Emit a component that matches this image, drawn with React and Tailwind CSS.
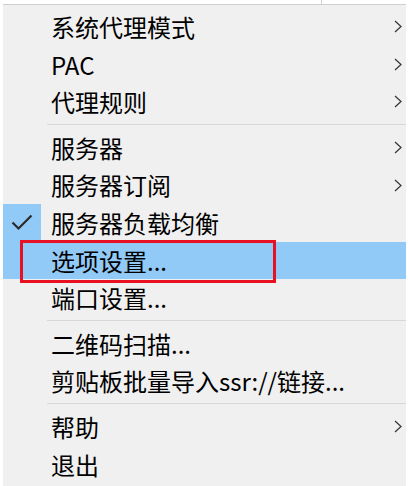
const menu = [
  { label: "系统代理模式", sub: true },
  { label: "PAC", sub: true },
  { label: "代理规则", sub: true },
  "sep",
  { label: "服务器", sub: true },
  { label: "服务器订阅", sub: true },
  { label: "服务器负载均衡", checked: true },
  { label: "选项设置...", active: true },
  { label: "端口设置..." },
  "sep",
  { label: "二维码扫描..." },
  { label: "剪贴板批量导入ssr://链接..." },
  "sep",
  { label: "帮助", sub: true },
  { label: "退出" },
];

const Chevron = () => (
  <svg width="8" height="13" viewBox="0 0 8 13" className="text-[#333]">
    <path d="M1 1 L7 6.5 L1 12" fill="none" stroke="currentColor" strokeWidth="1.2" />
  </svg>
);

const Check = () => (
  <svg width="22" height="17" viewBox="0 0 22 17" className="text-[#2b2b2b]">
    <path d="M1.5 8.5 L7.5 14.5 L20.5 1.5" fill="none" stroke="currentColor" strokeWidth="2.2" />
  </svg>
);

const MenuRow = ({ item }) => (
  <div
    className={`relative flex h-[37.6px] items-center ${item.active ? "bg-[#91c9f7]" : ""}`}
  >
    <div
      className={`flex h-full w-[38px] shrink-0 items-center justify-center ${item.checked ? "bg-[#91c9f7]" : ""}`}
    >
      {item.checked && <Check />}
    </div>
    <span className="ml-[10px] flex-1 text-[24px] leading-[37.6px] text-black">{item.label}</span>
    {item.sub && (
      <span className="mr-[4px] flex items-center">
        <Chevron />
      </span>
    )}
    {item.active && (
      <div className="pointer-events-none absolute left-[17px] top-[-1.6px] h-[43px] w-[256px] border-[3px] border-[#e81123]" />
    )}
  </div>
);

export default function App() {
  return (
    <div
      className="h-[486px] w-[408px] overflow-hidden bg-white"
      style={{ fontFamily: '"Noto Sans CJK SC", "Noto Sans", sans-serif' }}
    >
      <div className="flex h-[4px]">
        <div className="w-[321px]" />
        <div className="h-full w-px bg-[#cfcfcf]" />
      </div>
      <div className="ml-[3px] mr-[2px] h-[482px] border-t border-[#cfcfcf] bg-[#f0f0f0] pt-[3px]">
        {menu.map((item, i) =>
          item === "sep" ? (
            <div key={i} className="flex h-[8px] items-center pl-[44px]">
              <div className="h-px w-full bg-[#d7d7d7]" />
            </div>
          ) : (
            <MenuRow key={i} item={item} />
          ),
        )}
      </div>
    </div>
  );
}
